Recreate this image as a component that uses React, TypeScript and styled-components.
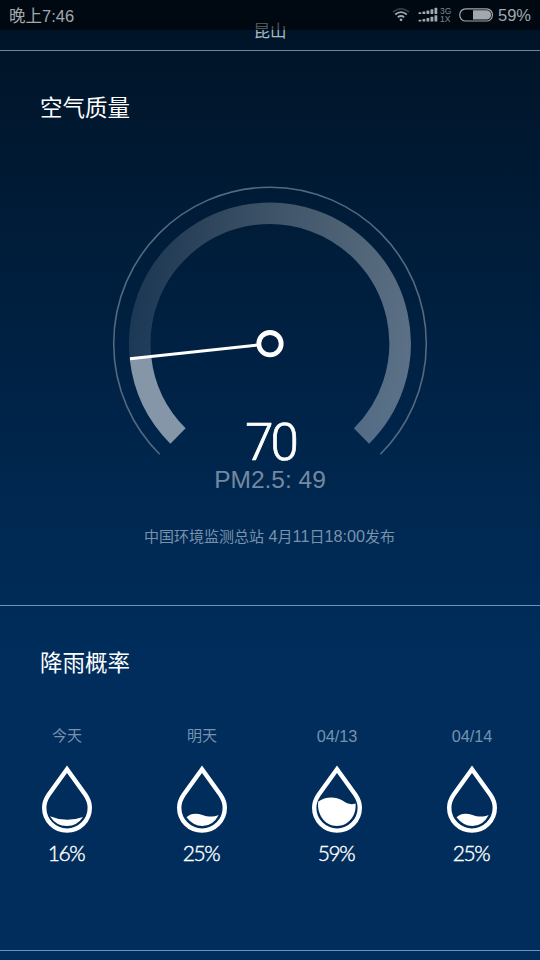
import React from "react";
import styled, { createGlobalStyle } from "styled-components";

const GlobalStyle = createGlobalStyle`
  html, body { margin: 0; padding: 0; background: #002d5c; }
  * { box-sizing: border-box; }
  body { overflow: hidden; font-family: "Liberation Sans", "Noto Sans CJK SC", sans-serif; }
`;

const Screen = styled.main`
  position: relative;
  width: 540px;
  height: 960px;
  overflow: hidden;
  display: flex;
  flex-direction: column;
  color: #fff;
  background: linear-gradient(180deg, #001326 0, #00162c 90px, #001c38 220px, #002347 400px, #002a55 560px, #002d5c 660px, #002d5c 100%);
`;

const StatusBar = styled.header`
  position: absolute;
  inset: 0 0 auto 0;
  height: 30px;
  padding: 0 9px;
  display: flex;
  align-items: center;
  justify-content: space-between;
  background: rgba(0, 0, 0, 0.55);
  color: #a3a8ad;
  font-size: 16.5px;
  line-height: 30px;
  white-space: nowrap;
`;

const Clock = styled.time`
  padding-top: 1px;
  font-size: 16.5px;
`;

const Indicators = styled.div`
  display: flex;
  align-items: center;
`;

const WifiIcon = styled.svg`
  margin-right: 7px;
`;

const NetworkLabels = styled.div`
  display: flex;
  flex-direction: column;
  width: 20px;
  padding-left: 1px;
  font-size: 8.5px;
  line-height: 8px;
  color: #80868b;
`;

const BatteryText = styled.span`
  margin-left: 4px;
`;

const CityBar = styled.div`
  height: 51px;
  flex: none;
  padding-top: 19px;
  text-align: center;
  font-size: 16.5px;
  line-height: 24px;
  color: #aab8c4;
  border-bottom: 1px solid #748595;
`;

const Section = styled.section<{ $height: number }>`
  height: ${(p) => p.$height}px;
  flex: none;
  display: flex;
  flex-direction: column;
  border-bottom: 1px solid #7193b5;
`;

const SectionTitle = styled.h2`
  margin: 42px 0 0 40px;
  height: 32px;
  flex: none;
  font-size: 22.5px;
  line-height: 32px;
  font-weight: 400;
`;

const Gauge = styled.div`
  height: 297px;
  flex: none;
  margin-top: 53px;
  display: flex;
  justify-content: center;
`;

const Readings = styled.div`
  margin-top: -57px;
  display: flex;
  flex-direction: column;
  align-items: center;
`;

const Index = styled.strong`
  height: 48px;
  font-family: Roboto, sans-serif;
  font-weight: 300;
  font-size: 51px;
  line-height: 49px;
  letter-spacing: -3px;
  margin-right: -1px;
  -webkit-text-stroke: 0.7px #fff;
`;

const Particles = styled.span`
  font-size: 24.5px;
  line-height: 28px;
  color: #7489a0;
`;

const Source = styled.p`
  margin: 31px 1px 0 0;
  text-align: center;
  font-size: 15px;
  line-height: 22px;
  color: #7892ac;
`;

const Numeric = styled.span`
  font-size: 16.2px;
`;

const Days = styled.div`
  display: grid;
  grid-template-columns: repeat(4, 135px);
  margin-top: 45px;
`;

const Day = styled.article`
  display: flex;
  flex-direction: column;
  align-items: center;
  padding-right: 1px;
`;

const DayName = styled.span<{ $numeric: boolean }>`
  height: 22px;
  font-size: ${(p) => (p.$numeric ? 16.3 : 15)}px;
  line-height: 22px;
  color: #7892ac;
`;

const DropIcon = styled.svg`
  width: 52px;
  height: 72px;
  margin-top: 16px;
`;

const Chance = styled.span`
  margin: 4px 2px 0 0;
  font-family: Lato, sans-serif;
  font-weight: 300;
  font-size: 21px;
  line-height: 28px;
  height: 28px;
  letter-spacing: -1.4px;
  -webkit-text-stroke: 0.4px #fff;
`;

const waves = {
  low: "M9 53.2 Q25 60 42 53.9 Q36 63 26 63 Q15 63 9 53.2Z",
  quarter: "M10.5 54.3 C15 49.8 20.5 50 26.5 52 C32.5 54 37 54 42.7 52 Q37 63 26.5 63 Q17 63 10.5 54.3Z",
  high: "M7.3 38.5 C13 34 24 32.6 31.5 37.5 C36 40.5 39 42 44.6 40.6 C45.5 53 37.5 63 26 63 C13 63 5.5 50 7.3 38.5Z",
};

const days: { name: string; chance: string; wave: keyof typeof waves }[] = [
  { name: "今天", chance: "16%", wave: "low" },
  { name: "明天", chance: "25%", wave: "quarter" },
  { name: "04/13", chance: "59%", wave: "high" },
  { name: "04/14", chance: "25%", wave: "quarter" },
];

function Dial() {
  return (
    <svg width="320" height="297" viewBox="110 178 320 297" fill="none">
      <defs>
        <linearGradient id="scale" gradientUnits="userSpaceOnUse" x1="130" y1="344" x2="411" y2="360">
          <stop offset="0" stopColor="#fff" stopOpacity="0.11" />
          <stop offset="0.25" stopColor="#fff" stopOpacity="0.18" />
          <stop offset="0.5" stopColor="#fff" stopOpacity="0.25" />
          <stop offset="0.8" stopColor="#fff" stopOpacity="0.32" />
          <stop offset="1" stopColor="#fff" stopOpacity="0.36" />
        </linearGradient>
      </defs>
      <path d="M159.7 454.3 A156.3 156.3 0 1 1 380.3 454.3" stroke="#53697f" strokeWidth="1.6" />
      <path d="M140.5 358 A130.2 130.2 0 1 1 361.5 436" stroke="url(#scale)" strokeWidth="21.6" />
      <path d="M178 436 A130.2 130.2 0 0 1 140.5 358" stroke="#8496a8" strokeWidth="21.6" />
      <path d="M130 358.8 L258 345" stroke="#fff" strokeWidth="3.1" />
      <circle cx="270" cy="343.7" r="11.2" stroke="#fff" strokeWidth="4.8" />
    </svg>
  );
}

function Wifi() {
  return (
    <WifiIcon width="20" height="16" viewBox="0 0 20 16" fill="none" strokeWidth="1.8">
      <path d="M2 5 Q10 -1.6 18 5" stroke="#34393e" />
      <path d="M4.2 7.5 Q10 2.8 15.8 7.5" stroke="#a3a8ad" />
      <path d="M6.8 10.2 Q10 7.8 13.2 10.2" stroke="#a3a8ad" />
      <circle cx="10" cy="12.8" r="1.4" fill="#a3a8ad" />
    </WifiIcon>
  );
}

function Signal() {
  const bars = [1.8, 2.4, 3.4, 4.8, 6.2];
  return (
    <svg width="21" height="16" viewBox="0 0 21 16" fill="#a3a8ad">
      {[7, 14.5].map((base) =>
        bars.map((h, i) => (
          <rect key={`${base}-${i}`} x={0.5 + i * 4} y={base - h} width="2.8" height={h} rx="0.6" />
        )),
      )}
    </svg>
  );
}

function Battery() {
  return (
    <svg width="35" height="14" viewBox="0 0 35 14" fill="none">
      <rect x="0.8" y="0.8" width="32.6" height="12.2" rx="5.8" stroke="#a3a8ad" strokeWidth="1.2" />
      <path d="M14 2.3 H28 Q32 3 32 6.9 Q32 10.8 28 11.5 H14Z" fill="#a3a8ad" />
    </svg>
  );
}

export default function App() {
  return (
    <>
      <GlobalStyle />
      <Screen>
        <CityBar>昆山</CityBar>
        <Section $height={555}>
          <SectionTitle>空气质量</SectionTitle>
          <Gauge>
            <Dial />
          </Gauge>
          <Readings>
            <Index>70</Index>
            <Particles>PM2.5: 49</Particles>
          </Readings>
          <Source>
            中国环境监测总站<Numeric> 4</Numeric>月<Numeric>11</Numeric>日<Numeric>18:00</Numeric>发布
          </Source>
        </Section>
        <Section $height={345}>
          <SectionTitle>降雨概率</SectionTitle>
          <Days>
            {days.map((d) => (
              <Day key={d.name}>
                <DayName $numeric={d.name.includes("/")}>{d.name}</DayName>
                <DropIcon viewBox="0 0 52 72" fill="none">
                  <path
                    d="M26 6.3 L7.6 31.8 Q3.2 38.3 3.2 44.8 A22.8 22.8 0 0 0 48.8 44.8 Q48.8 38.3 44.4 31.8 Z"
                    stroke="#fff"
                    strokeWidth="4.4"
                  />
                  <path d={waves[d.wave]} fill="#fff" />
                </DropIcon>
                <Chance>{d.chance}</Chance>
              </Day>
            ))}
          </Days>
        </Section>
        <StatusBar>
          <Clock>晚上7:46</Clock>
          <Indicators>
            <Wifi />
            <Signal />
            <NetworkLabels>
              <span>3G</span>
              <span>1X</span>
            </NetworkLabels>
            <Battery />
            <BatteryText>59%</BatteryText>
          </Indicators>
        </StatusBar>
      </Screen>
    </>
  );
}
